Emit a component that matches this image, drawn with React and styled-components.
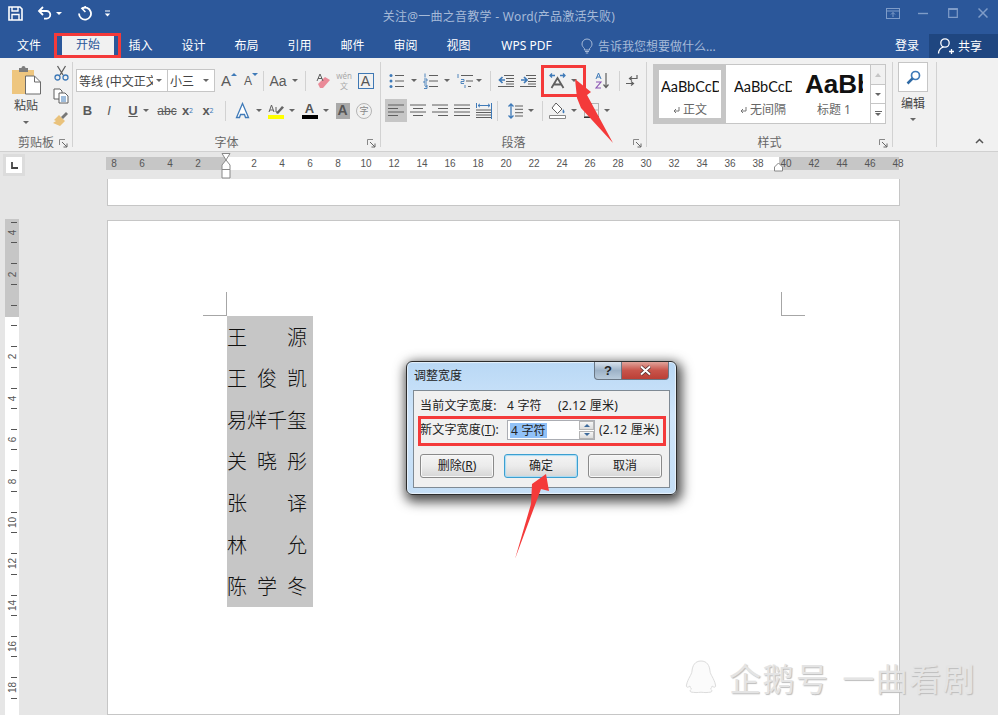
import React from 'react';
import styled, { createGlobalStyle } from 'styled-components';

const UI_FONT = '"Noto Sans", "Noto Sans CJK SC", sans-serif';

const GlobalStyle = createGlobalStyle`
  html, body {
    margin: 0;
    padding: 0;
    background: #e6e6e6;
  }
  * {
    box-sizing: border-box;
  }
`;

const Page = styled.div`
  position: relative;
  width: 998px;
  height: 715px;
  overflow: hidden;
  display: flex;
  flex-direction: column;
  font-family: ${UI_FONT};
  font-size: 12px;
  color: #444;
`;

/* title bar */
const TitleBar = styled.div`
  height: 29px;
  background: #2b579a;
  display: grid;
  grid-template-columns: 1fr auto 1fr;
  align-items: center;
`;

const Qat = styled.div`
  display: flex;
  align-items: center;
  padding: 0 0 3px 6px;
`;

const QatButton = styled.div`
  width: ${(p) => p.$w}px;
  height: 22px;
  display: flex;
  align-items: center;
  justify-content: center;
  gap: 4px;
`;

const WhiteCaret = styled.span`
  width: 0;
  height: 0;
  border: 3px solid transparent;
  border-top: 3px solid #fff;
  border-bottom: 0;
`;

const DocTitle = styled.div`
  color: #a6bad8;
  font-size: 12px;
  line-height: 16px;
  letter-spacing: 0.25px;
  padding-top: 5px;
`;

const WindowControls = styled.div`
  display: flex;
  justify-content: flex-end;
  padding: 0 0 3px;
`;

const WindowButton = styled.div`
  width: 30px;
  height: 22px;
  display: flex;
  align-items: center;
  justify-content: center;
`;

/* tabs */
const TabRow = styled.div`
  height: 29px;
  background: #2b579a;
  display: flex;
  align-items: flex-end;
`;

const Tab = styled.div`
  width: ${(p) => p.$w}px;
  height: ${(p) => (p.$active ? 25 : 24)}px;
  line-height: 24px;
  margin-left: ${(p) => p.$ml || 0}px;
  text-align: center;
  font-size: 12px;
  color: ${(p) => (p.$active ? '#2b579a' : '#fff')};
  background: ${(p) => (p.$active ? '#f1f1f1' : 'transparent')};
  padding-bottom: 3px;
`;

const TellMe = styled.div`
  display: flex;
  align-items: center;
  gap: 5px;
  height: 24px;
  margin-left: 13px;
  color: #a6bad8;
  font-size: 12px;
  padding-bottom: 1px;
`;

const Login = styled.div`
  margin-left: auto;
  width: 44px;
  height: 24px;
  line-height: 24px;
  text-align: center;
  color: #fff;
`;

const ShareButton = styled.div`
  width: 69px;
  height: 24px;
  background: #1f4680;
  color: #fff;
  display: flex;
  align-items: center;
  gap: 3px;
  padding-left: 8px;
`;

/* ribbon */
const Ribbon = styled.div`
  height: 94px;
  background: #f1f1f1;
  border-bottom: 1px solid #d0d0d0;
  padding-top: 4px;
  display: flex;
`;

const Group = styled.div`
  width: ${(p) => p.$w}px;
  flex: ${(p) => (p.$grow ? 1 : 'none')};
  height: 85px;
  border-right: ${(p) => (p.$grow ? 'none' : '1px solid #d2d2d2')};
  display: flex;
  flex-direction: column;
`;

const GroupBody = styled.div`
  flex: 1;
  min-height: 0;
  padding: ${(p) => (p.$tight ? '0' : '7px 0 0 4px')};
  display: ${(p) => (p.$tight ? 'flex' : 'block')};
`;

const GroupFooter = styled.div`
  height: 14px;
  margin-bottom: -3px;
  display: grid;
  grid-template-columns: 1fr auto 1fr;
  align-items: center;
  color: #666;
  font-size: 12px;
  line-height: 14px;
`;

const Launcher = styled.svg`
  justify-self: end;
  margin-right: 4px;
`;

const ToolRow = styled.div`
  display: flex;
  align-items: center;
  height: 23px;
  margin-bottom: 7px;
  margin-left: ${(p) => p.$ml || 0}px;
`;

const Tool = styled.div`
  flex: none;
  width: ${(p) => p.$w}px;
  height: 23px;
  margin-left: ${(p) => p.$ml || 0}px;
  padding-left: ${(p) => p.$pl || 0}px;
  display: flex;
  align-items: center;
  justify-content: ${(p) => (p.$pl === undefined ? 'center' : 'flex-start')};
  gap: ${(p) => p.$gap ?? 5}px;
  background: ${(p) => (p.$on ? '#c6c6c6' : 'transparent')};
  color: #5a5a5a;
`;

const Caret = styled.span`
  flex: none;
  width: 0;
  height: 0;
  border: 3px solid transparent;
  border-top: 3px solid #666;
  border-bottom: 0;
`;

const Divider = styled.div`
  flex: none;
  width: 1px;
  height: ${(p) => p.$h || 20}px;
  background: #d2d2d2;
  margin: 0 ${(p) => p.$r}px 0 ${(p) => p.$l}px;
`;

const Combo = styled.div`
  flex: none;
  width: ${(p) => p.$w}px;
  height: 23px;
  background: #fff;
  border: 1px solid #c6c6c6;
  margin-left: -1px;
  display: flex;
  align-items: center;
  justify-content: space-between;
  padding: 0 5px 0 2px;
  color: #444;
  font-size: 12px;
  white-space: nowrap;
  overflow: hidden;
`;

const ComboText = styled.span`
  width: ${(p) => p.$w}px;
  overflow: hidden;
`;

const LetterIcon = styled.span`
  font-family: "Liberation Sans", sans-serif;
  font-size: ${(p) => p.$size || 13}px;
  font-weight: ${(p) => (p.$bold ? 700 : 400)};
  font-style: ${(p) => (p.$italic ? 'italic' : 'normal')};
  text-decoration: ${(p) => p.$deco || 'none'};
  color: ${(p) => p.$color || '#5a5a5a'};
  line-height: 16px;
`;

const Mini = styled.sup`
  font-size: ${(p) => p.$size || 7}px;
  color: ${(p) => p.$color || '#5a5a5a'};
  vertical-align: ${(p) => (p.$low ? '-3px' : '5px')};
  line-height: 0;
`;

const SizeArrow = styled.span`
  align-self: flex-start;
  margin: 4px 0 0 0;
  width: 0;
  height: 0;
  border: 3px solid transparent;
  border-top: ${(p) => (p.$down ? `3px solid ${BLUE}` : '0')};
  border-bottom: ${(p) => (p.$down ? '0' : `3px solid ${BLUE}`)};
`;

const BoxedLetter = styled.span`
  width: 16px;
  height: 16px;
  border: 1px solid #3f78b4;
  font-family: "Liberation Sans", sans-serif;
  font-size: 14px;
  line-height: 15px;
  text-align: center;
  color: #555;
`;

const ShadedLetter = styled(BoxedLetter)`
  width: 14px;
  border: none;
  background: #a9a9a9;
  font-weight: 700;
`;

const CircleChar = styled.span`
  width: 16px;
  height: 16px;
  border: 1px solid #b5b5b5;
  border-radius: 50%;
  font-size: 9px;
  line-height: 14px;
  text-align: center;
  color: #888;
`;

const WenStack = styled.span`
  display: flex;
  flex-direction: column;
  align-items: center;
  color: #aaa;
  font-size: 8px;
  line-height: 10px;
`;

const ColorLetter = styled.span`
  display: flex;
  flex-direction: column;
  align-items: center;
  width: 16px;
  font-family: "Liberation Sans", sans-serif;
  font-size: 13px;
  font-weight: 700;
  line-height: 13px;
  color: #555;
  &::after {
    content: '';
    width: 16px;
    height: 4px;
    background: ${(p) => p.$bar};
  }
`;

/* clipboard group */
const PasteColumn = styled.div`
  width: 50px;
  display: flex;
  flex-direction: column;
  align-items: center;
  padding: 3px 0 0 2px;
  color: #444;
  line-height: 14px;
`;

const PasteLabel = styled.span`
  margin: 4px 0 8px;
`;

const SmallColumn = styled.div`
  width: 22px;
  display: flex;
  flex-direction: column;
  align-items: center;
  margin-top: -1px;
`;

/* styles gallery */
const Gallery = styled.div`
  width: 233px;
  height: 60px;
  margin: 2px 0 0 6px;
  background: #fff;
  border: 1px solid #c6c6c6;
  display: flex;
`;

const StyleItem = styled.div`
  width: ${(p) => p.$w}px;
  height: 58px;
  border: ${(p) => (p.$on ? '5px solid #c6c6c6' : '5px solid transparent')};
  display: flex;
  flex-direction: column;
  align-items: center;
  overflow: hidden;
`;

const StylePreview = styled.div`
  width: ${(p) => p.$w}px;
  height: 29px;
  overflow: hidden;
  white-space: nowrap;
  font-family: ${(p) => (p.$big ? '"Liberation Sans"' : 'Lato')}, sans-serif;
  font-size: ${(p) => (p.$big ? 26 : 14.5)}px;
  font-weight: ${(p) => (p.$big ? 700 : 400)};
  line-height: ${(p) => (p.$big ? 29 : 33)}px;
  color: #111;
`;

const StyleName = styled.div`
  margin-top: 4px;
  font-size: 12px;
  line-height: 16px;
  color: #666;
  white-space: nowrap;
`;

const GalleryScroll = styled.div`
  margin-left: auto;
  width: 15px;
  border-left: 1px solid #c6c6c6;
  display: grid;
  grid-template-rows: 20px 19px 1fr;
`;

const ScrollCell = styled.div`
  background: ${(p) => (p.$off ? '#f1f1f1' : '#fff')};
  border-bottom: ${(p) => (p.$last ? 'none' : '1px solid #c6c6c6')};
  display: flex;
  flex-direction: column;
  gap: 1px;
  align-items: center;
  justify-content: center;
`;

const UpCaret = styled.span`
  width: 0;
  height: 0;
  border: 3px solid transparent;
  border-bottom: 4px solid #c6c6c6;
  border-top: 0;
`;

const ScrollLine = styled.span`
  width: 7px;
  height: 1px;
  background: #666;
`;

/* edit group */
const EditColumn = styled.div`
  width: 100%;
  display: flex;
  flex-direction: column;
  align-items: center;
  padding-right: 3px;
  color: #444;
`;

const SearchBox = styled.div`
  width: 30px;
  height: 30px;
  background: #fff;
  border: 1px solid #c6c6c6;
  display: flex;
  align-items: center;
  justify-content: center;
`;

const EditLabel = styled.div`
  margin: 5px 0 7px;
  line-height: 14px;
`;

const Collapse = styled.svg`
  display: block;
  margin: 76px 0 0 38px;
`;

/* workspace */
const Workspace = styled.div`
  flex: 1;
  min-height: 0;
  background: #e6e6e6;
  display: flex;
  flex-direction: column;
`;

const RulerRow = styled.div`
  height: 27px;
  flex: none;
  display: flex;
  padding-left: 3px;
`;

const TabSelector = styled.div`
  width: 22px;
  height: 22px;
  margin-top: 2px;
  background: #dcdcdc;
  padding: 3px;
`;

const TabSelectorInner = styled.div`
  height: 16px;
  background: #fff;
  display: flex;
  align-items: center;
  justify-content: center;
`;

const HRuler = styled.div`
  position: relative;
  width: 793px;
  height: 13px;
  margin: 5px 0 0 81px;
  background: linear-gradient(to right, #c6c6c6 120px, #fff 120px, #fff 673px, #c6c6c6 673px);
`;

const HRulerScale = styled.div`
  display: flex;
  margin-left: -6px;
`;

const HRulerCell = styled.div`
  flex: none;
  width: 28px;
  text-align: center;
  font-family: "Liberation Sans", sans-serif;
  font-size: 10px;
  line-height: 13px;
  color: #555;
`;

const IndentMark = styled.svg`
  position: absolute;
  top: -4px;
  left: ${(p) => p.$x}px;
`;

const DocRow = styled.div`
  flex: 1;
  min-height: 0;
  display: flex;
`;

const VRulerColumn = styled.div`
  flex: none;
  width: 107px;
  padding: 40px 0 0 5px;
`;

const VRuler = styled.div`
  width: 14px;
  height: 100%;
  overflow: hidden;
  background: linear-gradient(to bottom, #c6c6c6 98px, #fff 98px);
`;

const VRulerScale = styled.div`
  margin-top: -7px;
`;

const VRulerCell = styled.div`
  position: relative;
  height: 41.4px;
  display: flex;
  align-items: center;
  justify-content: center;
  font-family: "Liberation Sans", sans-serif;
  font-size: 10px;
  color: #555;
  &::before,
  &::after {
    content: '';
    position: absolute;
    left: 6px;
    width: 6px;
    height: 1px;
    background: #555;
  }
  &::before {
    top: 10px;
  }
  &::after {
    bottom: 10px;
  }
`;

const VRulerLabel = styled.span`
  display: block;
  transform: rotate(-90deg);
  margin-left: 1px;
`;

const DocColumn = styled.div`
  flex: none;
  width: 793px;
  display: flex;
  flex-direction: column;
`;

const PageStub = styled.div`
  flex: none;
  height: 27px;
  background: #fff;
  border: 1px solid #c6c6c6;
  border-top: none;
`;

const DocPage = styled.div`
  position: relative;
  flex: 1;
  margin-top: 14px;
  background: #fff;
  border: 1px solid #c6c6c6;
  padding: 95px 0 0 119px;
`;

const CropMark = styled.div`
  position: absolute;
  top: 71px;
  width: 24px;
  height: 24px;
  border-bottom: 1px solid #a6a6a6;
  ${(p) => (p.$right
    ? 'left: 673px; border-left: 1px solid #a6a6a6;'
    : 'left: 95px; border-right: 1px solid #a6a6a6;')}
`;

const Selection = styled.div`
  width: 86px;
  height: 291px;
  background: #c6c6c6;
`;

const NameRow = styled.div`
  width: 80px;
  height: 41.57px;
  display: flex;
  justify-content: space-between;
  align-items: center;
  font-family: "Noto Sans CJK SC", sans-serif;
  font-weight: 300;
  font-size: 20px;
  line-height: 24px;
  color: #111;
`;

/* dialog */
const Dialog = styled.div`
  position: absolute;
  left: 406px;
  top: 361px;
  width: 271px;
  height: 134px;
  border: 1px solid #2c2c2c;
  border-radius: 6px;
  background: linear-gradient(to bottom, #b9d8f5, #cfe5fa 40%, #c4def6);
  box-shadow: 0 0 1px 1px rgba(255, 255, 255, 0.6) inset, 2px 4px 12px 3px rgba(0, 0, 0, 0.7);
  padding: 0 6px;
  display: flex;
  flex-direction: column;
`;

const DialogHead = styled.div`
  height: 28px;
  flex: none;
  display: flex;
  justify-content: space-between;
  align-items: flex-start;
`;

const DialogTitle = styled.div`
  margin: 6px 0 0 1px;
  color: #222;
  font-size: 12px;
  line-height: 16px;
`;

const CaptionButtons = styled.div`
  display: flex;
  margin-right: 1px;
`;

const HelpButton = styled.div`
  width: 28px;
  height: 18px;
  border: 1px solid #6a7785;
  border-top: none;
  border-radius: 0 0 0 4px;
  background: linear-gradient(to bottom, #d9e3ee, #9db2c7 50%, #b9cbdc);
  color: #222;
  font-family: "Liberation Sans", sans-serif;
  font-weight: 700;
  font-size: 13px;
  line-height: 17px;
  text-align: center;
`;

const CloseButton = styled(HelpButton)`
  width: 47px;
  border-radius: 0 0 4px 0;
  border-left: none;
  background: linear-gradient(to bottom, #e0a49b, #c8544a 50%, #bb3f36);
  display: flex;
  align-items: center;
  justify-content: center;
`;

const DialogPanel = styled.div`
  height: 98px;
  flex: none;
  background: #f0f0f0;
  border: 1px solid #7f8a94;
  padding: 5px 0 0 6px;
`;

const PanelRow = styled.div`
  height: 20px;
  display: flex;
  align-items: center;
  margin-bottom: ${(p) => p.$mb || 0}px;
  color: #222;
  font-size: 12px;
  line-height: 16px;
  letter-spacing: 0.2px;
  white-space: nowrap;
`;

const PanelLabel = styled.span`
  width: 87px;
  flex: none;
`;

const PanelValue = styled.span`
  width: 51px;
  flex: none;
`;

const Accel = styled.span`
  text-decoration: underline;
`;

const SpinInput = styled.div`
  width: 88px;
  height: 20px;
  flex: none;
  background: #fff;
  border: 1px solid #abadb3;
  display: flex;
  align-items: center;
  padding-left: 2px;
  margin-right: 4px;
`;

const Highlight = styled.span`
  background: #91c1f7;
  line-height: 15px;
  padding: 0 1px;
`;

const Spinner = styled.div`
  margin-left: auto;
  width: 15px;
  height: 18px;
  display: grid;
  grid-template-rows: 1fr 1fr;
  gap: 1px;
`;

const SpinCell = styled.div`
  background: linear-gradient(to bottom, #f6f6f6, #dcdcdc);
  border: 1px solid #b5b5b5;
  display: flex;
  align-items: center;
  justify-content: center;
`;

const SpinUp = styled.span`
  width: 0;
  height: 0;
  border: 3px solid transparent;
  border-bottom: 3px solid #3d6a9c;
  border-top: 0;
`;

const SpinDown = styled(SpinUp)`
  border-bottom: 0;
  border-top: 3px solid #3d6a9c;
`;

const DialogButtons = styled.div`
  display: flex;
  gap: 10px;
  margin-top: 14px;
`;

const DialogButton = styled.div`
  width: 74px;
  height: 24px;
  border: 1px solid ${(p) => (p.$primary ? '#3c9fd0' : '#8a8a8a')};
  border-radius: 3px;
  background: linear-gradient(to bottom, #f4f4f4, #ebebeb 50%, #d6d6d6);
  box-shadow: ${(p) => (p.$primary ? 'inset 0 0 1px 1px #a8dcf5' : 'inset 0 0 0 1px #f8f8f8')};
  color: #222;
  font-size: 12px;
  line-height: 22px;
  text-align: center;
`;

/* annotations drawn on top of the screenshot */
const RedFrame = styled.div`
  position: absolute;
  border: 3px solid #f43a3a;
`;

const TabFrame = styled(RedFrame)`
  left: 54px;
  top: 33px;
  width: 67px;
  height: 25px;
`;

const KernFrame = styled(RedFrame)`
  left: 541px;
  top: 65px;
  width: 45px;
  height: 32px;
`;

const RowFrame = styled(RedFrame)`
  left: 418px;
  top: 416px;
  width: 248px;
  height: 30px;
`;

const ArrowLayer = styled.svg`
  position: absolute;
  left: 0;
  top: 0;
  pointer-events: none;
`;

const Watermark = styled.div`
  position: absolute;
  left: 685px;
  top: 659px;
  display: flex;
  align-items: flex-start;
  gap: 12px;
`;

const WatermarkText = styled.div`
  font-family: "Noto Sans CJK SC", sans-serif;
  font-size: 32px;
  line-height: 36px;
  letter-spacing: 1.5px;
  word-spacing: 4px;
  color: #e4e4e4;
  text-shadow: 1px 1px 1px #bdbdbd;
  white-space: nowrap;
`;

/* icons */
const GRAY = '#5f5f5f';
const BLUE = '#3f7ab8';

const Icon = ({ w = 16, h = 16, children }) => (
  <svg width={w} height={h} viewBox={`0 0 ${w} ${h}`} fill="none">{children}</svg>
);

const SaveIcon = () => (
  <Icon w={15} h={15}>
    <path d="M1 1h11l2 2v11H1z" stroke="#fff" strokeWidth="1.600" />
    <path d="M4 1v4h6V1M4 14V8.500h7V14" stroke="#fff" strokeWidth="1.400" />
  </Icon>
);

const UndoIcon = () => (
  <Icon w={15} h={14}>
    <path d="M2 5h7.500a3.700 3.700 0 0 1 0 7.600H7" stroke="#fff" strokeWidth="1.800" />
    <path d="M6 1 2 5l4 4" stroke="#fff" strokeWidth="1.800" />
  </Icon>
);

const RedoIcon = () => (
  <Icon w={15} h={15}>
    <path d="M5 2.400A6 6 0 1 1 2 7.500" stroke="#fff" strokeWidth="1.800" />
    <path d="M9 .5 5 2.500 8.400 6" stroke="#fff" strokeWidth="1.600" />
  </Icon>
);

const CustomizeIcon = () => (
  <Icon w={7} h={7}>
    <path d="M1 1h5" stroke="#fff" />
    <path d="M.8 3.500h5.400L3.500 6.500z" fill="#fff" />
  </Icon>
);

const FAINT = '#7f9cc8';

const RibbonModeIcon = () => (
  <Icon w={14} h={11}>
    <rect x=".5" y=".5" width="13" height="10" stroke={FAINT} />
    <path d="M.5 3h13M7 9V4.500M5 6.500l2-2 2 2" stroke={FAINT} />
  </Icon>
);

const MinIcon = () => <Icon w={10} h={10}><path d="M0 5.500h10" stroke={FAINT} strokeWidth="1.400" /></Icon>;
const MaxIcon = () => <Icon w={10} h={10}><path d="M.7.7h8.600v8.600H.7z" stroke={FAINT} strokeWidth="1.200" /><path d="M0 1.500h10" stroke={FAINT} /></Icon>;
const CloseIcon = () => <Icon w={10} h={10}><path d="m.5.5 9 9M9.500.5l-9 9" stroke={FAINT} strokeWidth="1.500" /></Icon>;

const LampIcon = () => (
  <Icon w={12} h={16}>
    <path d="M3.400 10.500C2 9 1 8 1 6a5 5 0 0 1 10 0c0 2-1 3-2.400 4.500V12H3.400z" stroke="#a6bad8" />
    <path d="M4 13.500h4M4.800 15h2.400" stroke="#a6bad8" />
  </Icon>
);

const PersonPlusIcon = () => (
  <Icon w={18} h={18}>
    <circle cx="8" cy="6" r="4.200" stroke="#fff" strokeWidth="1.300" />
    <path d="M1.500 16.500c0-3.500 2.500-6 5-6.300M12 14.500h5M14.500 12v5" stroke="#fff" strokeWidth="1.300" />
  </Icon>
);

const CaptionX = () => (
  <Icon w={13} h={11}>
    <path d="m2 1.500 9 8M11 1.500l-9 8" stroke="#4a2a2a" strokeWidth="3.400" />
    <path d="m2 1.500 9 8M11 1.500l-9 8" stroke="#fff" strokeWidth="2" />
  </Icon>
);

const PasteIcon = () => (
  <Icon w={30} h={30}>
    <path d="M1 5h22v24H1z" fill="#eec67f" />
    <path d="M8 3h2.500a2 2 0 0 1 4 0H17v4H8z" fill="#7d7d7d" />
    <path d="M14.500 11h9l6 6v12h-15z" fill="#fff" stroke="#6b6b6b" />
    <path d="M23.500 11v6h6" stroke="#6b6b6b" />
  </Icon>
);

const CutIcon = () => (
  <Icon w={15} h={16}>
    <path d="m3.500 1 5.500 9M11.500 1 6 10" stroke={GRAY} strokeWidth="1.300" />
    <circle cx="3.500" cy="12.500" r="2.500" stroke={BLUE} strokeWidth="1.300" />
    <circle cx="11.500" cy="12.500" r="2.500" stroke={BLUE} strokeWidth="1.300" />
  </Icon>
);

const CopyIcon = () => (
  <Icon w={16} h={16}>
    <path d="M1 1h6l2 2v8H1z" fill="#fff" stroke={GRAY} />
    <path d="M6 5h6l3 3v7H6z" fill="#fff" stroke={GRAY} />
    <path d="M8 9h5M8 11h5M8 13h5" stroke={BLUE} />
  </Icon>
);

const PainterIcon = () => (
  <Icon w={16} h={16}>
    <path d="m6 4 6 6-5 5-7-3 3-2-2-1z" fill="#e9c27c" />
    <path d="m8 6 5-5 2 2-5 5z" fill="#777" />
  </Icon>
);

const EraserIcon = () => (
  <Icon w={16} h={16}>
    <path d="m3 11 7-7 5 3-7 8H5z" fill="#ea8a98" />
    <path d="M2 8l3-7 3 7M3 5.500h4" stroke={GRAY} />
  </Icon>
);

const TextFxIcon = () => (
  <svg width="17" height="17" viewBox="0 0 17 17" fill="none">
    <path d="M8.500 1.500 14.500 15.500h-3l-1-3h-4l-1 3h-3z" fill="#fff" stroke="#3f7ab8" strokeWidth="1.300" />
  </svg>
);

const HighlightIcon = () => (
  <svg width="16" height="16" viewBox="0 0 16 16" fill="none">
    <path d="M1 9 3.500 2 6 9M2 7h3" stroke={GRAY} />
    <path d="M8 4v5h2" stroke={GRAY} />
    <path d="m8 10 6-7 2 1.500-6 6.500z" fill="#666" />
    <rect y="12" width="16" height="4" fill="#ffff00" />
  </svg>
);

const ListLines = ({ x = 6, w = 9 }) => (
  <path d={`M${x} 2.500h${w}M${x} 8h${w}M${x} 13.500h${w}`} stroke={GRAY} />
);

const BulletsIcon = () => (
  <Icon w={15} h={16}>
    <circle cx="2" cy="2.500" r="1.500" fill={BLUE} />
    <circle cx="2" cy="8" r="1.500" fill={BLUE} />
    <circle cx="2" cy="13.500" r="1.500" fill={BLUE} />
    <ListLines />
  </Icon>
);

const NumberingIcon = () => (
  <Icon w={15} h={16}>
    <path d="M2 .5v4M1 6h3v2H1v2h3M1 12h3v3.500H1M2 13.700h2" stroke={BLUE} strokeWidth=".9" />
    <ListLines />
  </Icon>
);

const MultiLevelIcon = () => (
  <Icon w={18} h={16}>
    <path d="M2 1v4M5 6.500h3v2H5v2h3M9 12v3" stroke={BLUE} strokeWidth=".9" />
    <path d="M5 2.500h12M10 8h7M12 13.500h3" stroke={GRAY} />
  </Icon>
);

const OutdentIcon = () => (
  <Icon w={16} h={12}>
    <path d="M6 .5h10M8 3.500h8M8 6.500h8M8 9h8M0 11.500h16" stroke={GRAY} />
    <path d="M7 5H2M4.500 2 1.500 5l3 3" stroke={BLUE} strokeWidth="1.700" />
  </Icon>
);

const IndentIcon = () => (
  <Icon w={16} h={12}>
    <path d="M6 .5h10M8 3.500h8M8 6.500h8M8 9h8M0 11.500h16" stroke={GRAY} />
    <path d="M1 5h5M4 2l3 3-3 3" stroke={BLUE} strokeWidth="1.700" />
  </Icon>
);

const DistributeIcon = () => (
  <Icon w={17} h={16}>
    <path d="M1 2.500h5M3 .5l-2 2 2 2M16 2.500h-5M14 .5l2 2-2 2" stroke={BLUE} strokeWidth="1.300" />
    <path d="m2.500 15 6-10 6 10M5 11.500h7" stroke={GRAY} strokeWidth="1.800" />
  </Icon>
);

const SortIcon = () => (
  <svg width="14" height="17" viewBox="0 0 14 17" fill="none">
    <path d="M1 7 3.500 1 6 7M2 5h3" stroke={BLUE} />
    <path d="M1 10h5l-5 6h5" stroke="#8a54b3" strokeWidth="1.100" />
    <path d="M11 1v14M8.500 12.500l2.500 3 2.500-3" stroke={GRAY} strokeWidth="1.200" />
  </svg>
);

const MarksIcon = () => (
  <svg width="12" height="14" viewBox="0 0 12 14" fill="none">
    <path d="M11 1v3.500H4M6 2.500l-2.500 2 2.500 2" stroke={GRAY} strokeWidth="1.200" />
    <path d="M0 9.500h7M5 7.500l2.500 2-2.500 2" stroke={GRAY} strokeWidth="1.200" />
  </svg>
);

const ALIGN = {
  left: 'M0 1h16M0 4.500h10M0 8h16M0 11.500h10',
  center: 'M0 1h16M3 4.500h10M0 8h16M3 11.500h10',
  right: 'M0 1h16M6 4.500h10M0 8h16M6 11.500h10',
  justify: 'M0 1h16M0 4.500h16M0 8h16M0 11.500h16',
};

const AlignIcon = ({ kind }) => (
  <Icon w={16} h={13}><path d={ALIGN[kind]} stroke={GRAY} /></Icon>
);

const SpreadIcon = () => (
  <Icon w={16} h={16}>
    <path d="M.5 0v5M2 2.500h12M4 .8 2 2.500l2 1.700M12 .8l2 1.700-2 1.700" stroke={BLUE} />
    <path d="M0 7h15M0 9.500h15M0 12h15M0 14.500h15" stroke={GRAY} />
    <path d="M15.500 0v16" stroke={BLUE} />
  </Icon>
);

const LineSpacingIcon = () => (
  <Icon w={15} h={16}>
    <path d="M3 1v14M.5 3.500 3 1l2.500 2.500M.5 12.500 3 15l2.500-2.500" stroke={BLUE} strokeWidth="1.300" />
    <path d="M7 3h8M7 6.300h8M7 9.700h8M7 13h8" stroke={GRAY} />
  </Icon>
);

const ShadingIcon = () => (
  <Icon w={17} h={17}>
    <path d="m7 1 6 6-4.500 4.500L3 6z" fill="#fff" stroke={GRAY} />
    <path d="M14 7c1.500 2 2 3 1 4s-2 0-1-4z" fill={BLUE} />
    <path d="M.5 13.500h16v3H.5z" fill="#fff" stroke="#888" />
  </Icon>
);

const BordersIcon = () => (
  <Icon w={15} h={15}>
    <path d="M.5.500h14v13H.5zM7.500.5v13M.5 7h14" stroke="#777" strokeDasharray="1 1" />
    <path d="M0 14.300h15" stroke="#333" strokeWidth="1.400" />
  </Icon>
);

const SearchIcon = () => (
  <Icon w={15} h={15}>
    <circle cx="9.500" cy="5.500" r="4" stroke={BLUE} strokeWidth="1.700" />
    <path d="M6.500 8.500 1.500 13.500" stroke="#2f6aa5" strokeWidth="2.500" />
  </Icon>
);

const LauncherIcon = () => (
  <Launcher width="9" height="9" viewBox="0 0 9 9" fill="none">
    <path d="M.5 6V.5H6" stroke="#888" />
    <path d="m3 3 5 5M8 4.500V8H4.500" stroke="#666" />
  </Launcher>
);

const ParaMark = () => (
  <svg width="7" height="7" viewBox="0 0 7 7" fill="none">
    <path d="M6 0v4H1M3 2 1 4l2 2" stroke="#777" />
  </svg>
);

const PenguinIcon = () => (
  <svg width="32" height="36" viewBox="0 0 32 36" fill="none">
    <path
      d="M16 2c6 0 8.500 4.500 9 10 .3 4 4 7 5.500 14 .5 3-1.500 2.500-3.500 1 0 1-.5 2-1.500 3 1.500 1 2 2.500.5 3-3 .7-7 .7-10 .2-3 .5-7 .5-10-.2-1.500-.5-1-2 .5-3-1-1-1.500-2-1.500-3-2 1.500-4 2-3.500-1C3 19 6.700 16 7 12c.5-5.500 3-10 9-10z"
      fill="#fbfbfb"
      stroke="#dcdcdc"
    />
  </svg>
);

const TOP_RULER = ['8', '6', '4', '2', ''].concat(
  Array.from({ length: 24 }, (_, i) => String((i + 1) * 2)),
);
const SIDE_RULER = ['4', '2', '', '2', '4', '6', '8', '10', '12', '14', '16', '18'];

const NAMES = [
  ['王', '源'],
  ['王', '俊', '凯'],
  ['易', '烊', '千', '玺'],
  ['关', '晓', '彤'],
  ['张', '译'],
  ['林', '允'],
  ['陈', '学', '冬'],
];

export default function App() {
  return (
    <Page>
      <GlobalStyle />

      <TitleBar>
        <Qat>
          <QatButton $w={18}><SaveIcon /></QatButton>
          <QatButton $w={50}><UndoIcon /><WhiteCaret /></QatButton>
          <QatButton $w={20}><RedoIcon /></QatButton>
          <QatButton $w={26}><CustomizeIcon /></QatButton>
        </Qat>
        <DocTitle>关注@一曲之音教学 - Word(产品激活失败)</DocTitle>
        <WindowControls>
          <WindowButton><RibbonModeIcon /></WindowButton>
          <WindowButton><MinIcon /></WindowButton>
          <WindowButton><MaxIcon /></WindowButton>
          <WindowButton><CloseIcon /></WindowButton>
        </WindowControls>
      </TitleBar>

      <TabRow>
        <Tab $w={58}>文件</Tab>
        <Tab $w={52} $ml={4} $active>开始</Tab>
        <Tab $w={53}>插入</Tab>
        <Tab $w={53}>设计</Tab>
        <Tab $w={53}>布局</Tab>
        <Tab $w={53}>引用</Tab>
        <Tab $w={53}>邮件</Tab>
        <Tab $w={53}>审阅</Tab>
        <Tab $w={53}>视图</Tab>
        <Tab $w={83}>WPS PDF</Tab>
        <TellMe><LampIcon />告诉我您想要做什么...</TellMe>
        <Login>登录</Login>
        <ShareButton><PersonPlusIcon />共享</ShareButton>
      </TabRow>

      <Ribbon>
        <Group $w={73}>
          <GroupBody $tight>
            <PasteColumn>
              <PasteIcon />
              <PasteLabel>粘贴</PasteLabel>
              <Caret />
            </PasteColumn>
            <SmallColumn>
              <Tool $w={22}><CutIcon /></Tool>
              <Tool $w={22}><CopyIcon /></Tool>
              <Tool $w={22}><PainterIcon /></Tool>
            </SmallColumn>
          </GroupBody>
          <GroupFooter>
            <span />
            <span>剪贴板</span>
            <LauncherIcon />
          </GroupFooter>
        </Group>

        <Group $w={308}>
          <GroupBody>
            <ToolRow>
              <Combo $w={92}><ComboText $w={74}>等线 (中文正文)</ComboText><Caret /></Combo>
              <Combo $w={48}>小三<Caret /></Combo>
              <Tool $w={22} $gap={0} $pl={6}><LetterIcon $size={15}>A</LetterIcon><SizeArrow /></Tool>
              <Tool $w={22} $gap={0} $pl={7}><LetterIcon $size={12}>A</LetterIcon><SizeArrow $down /></Tool>
              <Divider $l={4} $r={3} />
              <Tool $w={33}><LetterIcon $size={14}>Aa</LetterIcon><Caret /></Tool>
              <Divider $l={5} $r={6} />
              <Tool $w={21}><EraserIcon /></Tool>
              <Tool $w={22}><WenStack>wén<span>文</span></WenStack></Tool>
              <Tool $w={21}><BoxedLetter>A</BoxedLetter></Tool>
            </ToolRow>
            <ToolRow>
              <Tool $w={21}><LetterIcon $bold>B</LetterIcon></Tool>
              <Tool $w={22}><LetterIcon $italic>I</LetterIcon></Tool>
              <Tool $w={37}><LetterIcon $bold $deco="underline">U</LetterIcon><Caret /></Tool>
              <Tool $w={20}><LetterIcon $size={12} $deco="line-through">abc</LetterIcon></Tool>
              <Tool $w={21} $gap={0}><LetterIcon $bold>x</LetterIcon><Mini $low $color={BLUE}>2</Mini></Tool>
              <Tool $w={20} $gap={0}><LetterIcon $bold>x</LetterIcon><Mini $color={BLUE}>2</Mini></Tool>
              <Divider $l={7} $r={6} />
              <Tool $w={32}><TextFxIcon /><Caret /></Tool>
              <Tool $w={34}><HighlightIcon /><Caret /></Tool>
              <Tool $w={34}><ColorLetter $bar="#000">A</ColorLetter><Caret /></Tool>
              <Tool $w={21}><ShadedLetter>A</ShadedLetter></Tool>
              <Tool $w={22}><CircleChar>字</CircleChar></Tool>
            </ToolRow>
          </GroupBody>
          <GroupFooter>
            <span />
            <span>字体</span>
            <LauncherIcon />
          </GroupFooter>
        </Group>

        <Group $w={266}>
          <GroupBody>
            <ToolRow $ml={4}>
              <Tool $w={31} $pl={0} $gap={7}><BulletsIcon /><Caret /></Tool>
              <Tool $w={32} $pl={3} $gap={6}><NumberingIcon /><Caret /></Tool>
              <Tool $w={32} $pl={4} $gap={2}><MultiLevelIcon /><Caret /></Tool>
              <Divider $l={6} $r={4} />
              <Tool $w={22}><OutdentIcon /></Tool>
              <Tool $w={22}><IndentIcon /></Tool>
              <Tool $w={44} $ml={2}><DistributeIcon /><Caret /></Tool>
              <Tool $w={22} $ml={6}><SortIcon /></Tool>
              <Divider $l={6} $r={1} />
              <Tool $w={22}><MarksIcon /></Tool>
            </ToolRow>
            <ToolRow>
              <Tool $w={22} $on><AlignIcon kind="left" /></Tool>
              <Tool $w={22}><AlignIcon kind="center" /></Tool>
              <Tool $w={22}><AlignIcon kind="right" /></Tool>
              <Tool $w={22}><AlignIcon kind="justify" /></Tool>
              <Tool $w={21}><SpreadIcon /></Tool>
              <Divider $l={3} $r={7} />
              <Tool $w={32}><LineSpacingIcon /><Caret /></Tool>
              <Divider $l={5} $r={3} />
              <Tool $w={34}><ShadingIcon /><Caret /></Tool>
              <Tool $w={34}><BordersIcon /><Caret /></Tool>
            </ToolRow>
          </GroupBody>
          <GroupFooter>
            <span />
            <span>段落</span>
            <LauncherIcon />
          </GroupFooter>
        </Group>

        <Group $w={246}>
          <Gallery>
            <StyleItem $w={72} $on>
              <StylePreview $w={58}>AaBbCcDd</StylePreview>
              <StyleName><ParaMark /> 正文</StyleName>
            </StyleItem>
            <StyleItem $w={74}>
              <StylePreview $w={58}>AaBbCcDd</StylePreview>
              <StyleName><ParaMark /> 无间隔</StyleName>
            </StyleItem>
            <StyleItem $w={68}>
              <StylePreview $w={58} $big>AaBb</StylePreview>
              <StyleName>标题 1</StyleName>
            </StyleItem>
            <GalleryScroll>
              <ScrollCell $off><UpCaret /></ScrollCell>
              <ScrollCell><Caret /></ScrollCell>
              <ScrollCell $last><ScrollLine /><Caret /></ScrollCell>
            </GalleryScroll>
          </Gallery>
          <GroupBody />
          <GroupFooter>
            <span />
            <span>样式</span>
            <LauncherIcon />
          </GroupFooter>
        </Group>

        <Group $w={44}>
          <EditColumn>
            <SearchBox><SearchIcon /></SearchBox>
            <EditLabel>编辑</EditLabel>
            <Caret />
          </EditColumn>
        </Group>

        <Group $grow>
          <Collapse width="9" height="6" viewBox="0 0 9 6" fill="none">
            <path d="m1 5 3.500-3.500L8 5" stroke="#555" strokeWidth="1.500" />
          </Collapse>
        </Group>
      </Ribbon>

      <Workspace>
        <RulerRow>
          <TabSelector>
            <TabSelectorInner>
              <svg width="7" height="7" viewBox="0 0 7 7"><path d="M1 0v6h6" stroke="#444" strokeWidth="1.800" fill="none" /></svg>
            </TabSelectorInner>
          </TabSelector>
          <HRuler>
            <HRulerScale>
              {TOP_RULER.map((n, i) => <HRulerCell key={i}>{n}</HRulerCell>)}
            </HRulerScale>
            <IndentMark $x={115} width="11" height="26" viewBox="0 0 11 26" fill="none">
              <path d="M1 .5h8L5 7zM5 7l4 5v4.500H1V12zM1 16.500h8v8.500H1z" fill="#fff" stroke="#888" />
            </IndentMark>
            <IndentMark $x={667} width="11" height="24" viewBox="0 0 11 24" fill="none">
              <path d="M5.500 10l4 4v4h-8v-4z" fill="#fff" stroke="#888" />
            </IndentMark>
          </HRuler>
        </RulerRow>

        <DocRow>
          <VRulerColumn>
            <VRuler>
              <VRulerScale>
                {SIDE_RULER.map((n, i) => (
                  <VRulerCell key={i}><VRulerLabel>{n}</VRulerLabel></VRulerCell>
                ))}
              </VRulerScale>
            </VRuler>
          </VRulerColumn>
          <DocColumn>
            <PageStub />
            <DocPage>
              <CropMark />
              <CropMark $right />
              <Selection>
                {NAMES.map((chars) => (
                  <NameRow key={chars.join('')}>
                    {chars.map((c) => <span key={c}>{c}</span>)}
                  </NameRow>
                ))}
              </Selection>
            </DocPage>
          </DocColumn>
        </DocRow>
      </Workspace>

      <Dialog>
        <DialogHead>
          <DialogTitle>调整宽度</DialogTitle>
          <CaptionButtons>
            <HelpButton>?</HelpButton>
            <CloseButton><CaptionX /></CloseButton>
          </CaptionButtons>
        </DialogHead>
        <DialogPanel>
          <PanelRow $mb={4}>
            <PanelLabel>当前文字宽度:</PanelLabel>
            <PanelValue>4 字符</PanelValue>
            (2.12 厘米)
          </PanelRow>
          <PanelRow>
            <PanelLabel>新文字宽度(<Accel>T</Accel>):</PanelLabel>
            <SpinInput>
              <Highlight>4 字符</Highlight>
              <Spinner>
                <SpinCell><SpinUp /></SpinCell>
                <SpinCell><SpinDown /></SpinCell>
              </Spinner>
            </SpinInput>
            (2.12 厘米)
          </PanelRow>
          <DialogButtons>
            <DialogButton>删除(<Accel>R</Accel>)</DialogButton>
            <DialogButton $primary>确定</DialogButton>
            <DialogButton>取消</DialogButton>
          </DialogButtons>
        </DialogPanel>
      </Dialog>

      <TabFrame />
      <KernFrame />
      <RowFrame />

      <ArrowLayer width="998" height="715" viewBox="0 0 998 715">
        <polygon points="575,79 591,92 587,95 613,143 581,108 577,98" fill="#f43a3a" />
        <polygon points="546,474 549,491 541,489 515,559 531,504 532,484" fill="#f43a3a" />
      </ArrowLayer>

      <Watermark>
        <PenguinIcon />
        <WatermarkText>企鹅号 一曲看剧</WatermarkText>
      </Watermark>
    </Page>
  );
}
